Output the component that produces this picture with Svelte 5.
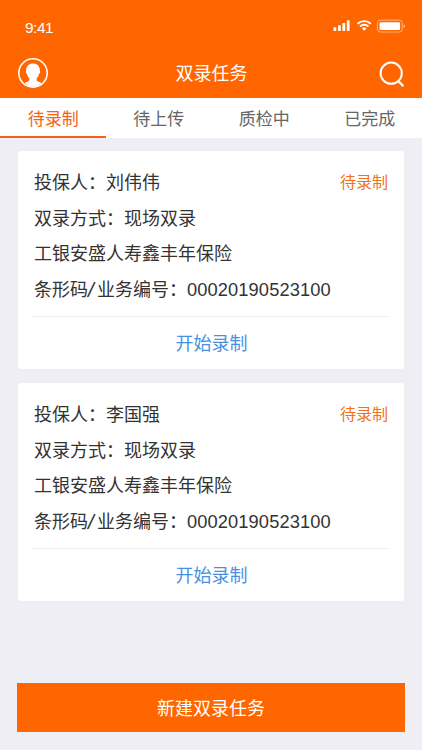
<script>
	const tabs = ['待录制', '待上传', '质检中', '已完成'];
	const tasks = [
		{ name: '刘伟伟', mode: '现场双录', product: '工银安盛人寿鑫丰年保险', code: '00020190523100', status: '待录制' },
		{ name: '李国强', mode: '现场双录', product: '工银安盛人寿鑫丰年保险', code: '00020190523100', status: '待录制' }
	];
	let active = $state(0);
</script>

<div class="page">
	<header>
		<div class="status-bar">
			<span class="time">9:41</span>
			<svg class="indicators" width="74" height="16" viewBox="0 0 74 16">
				<g fill="#fff">
					<rect x="1.5" y="8.3" width="2.8" height="3.7" rx="0.7" />
					<rect x="6" y="6.3" width="2.8" height="5.7" rx="0.7" />
					<rect x="10.4" y="4" width="2.8" height="8" rx="0.7" />
					<rect x="14.8" y="1.2" width="2.8" height="10.8" rx="0.7" />
				</g>
				<g fill="none" stroke="#fff" stroke-width="1.9">
					<path d="M25.6 4.8a9.4 9.4 0 0 1 13.2 0" />
					<path d="M28 7.5a6 6 0 0 1 8.4 0" />
				</g>
				<path d="M30 9.4a3.1 3.1 0 0 1 4.4 0l-2.2 2.4z" fill="#fff" />
				<rect x="45.3" y="1.2" width="25" height="11.8" rx="3" fill="none" stroke="#fff" stroke-opacity=".5" />
				<rect x="47.5" y="3.2" width="20.6" height="7.8" rx="1.2" fill="#fff" />
				<path d="M71.6 5.2v3.8q1.6-.6 1.6-1.9t-1.6-1.9z" fill="#fff" fill-opacity=".5" />
			</svg>
		</div>
		<div class="nav">
			<svg width="32" height="32" viewBox="0 0 32 32">
				<circle cx="16" cy="16" r="14.2" fill="none" stroke="#fff" stroke-width="1.6" />
				<path d="M16 6.4c4 0 6.8 2.7 6.8 6.8 0 1.1.6 1.2.3 2.4-.3 1.1-.9 1-1.2 1.8-.5 1.5-1 2.6-2 3.5-.6 1.8-.3 3 1.3 3.6l3.3 1.4A14 14 0 0 1 16 30a14 14 0 0 1-8.5-4.1l3.3-1.4c1.6-.6 1.9-1.8 1.3-3.6-1-.9-1.5-2-2-3.5-.3-.8-.9-.7-1.2-1.8-.3-1.2.3-1.3.3-2.4 0-4.1 2.8-6.8 6.8-6.8z" fill="#fff" />
			</svg>
			<h1>双录任务</h1>
			<svg class="search" width="26" height="27" viewBox="0 0 26 27">
				<circle cx="12.2" cy="12.2" r="10.6" fill="none" stroke="#fff" stroke-width="2" />
				<path d="M18.6 19.5l5.8 5.6" stroke="#fff" stroke-width="2.2" />
			</svg>
		</div>
	</header>

	<nav class="tabs">
		{#each tabs as tab, i}
			<button class="tab" class:active={active === i} onclick={() => (active = i)}>{tab}</button>
		{/each}
	</nav>

	<main>
		{#each tasks as task}
			<section class="card">
				<div class="info">
					<div class="row">
						<span>投保人：{task.name}</span>
						<span class="status">{task.status}</span>
					</div>
					<div class="row">双录方式：{task.mode}</div>
					<div class="row">{task.product}</div>
					<div class="row">条形码<span class="slash">/</span>业务编号：<span class="code">{task.code}</span></div>
				</div>
				<button class="start">开始录制</button>
			</section>
		{/each}
	</main>

	<footer>
		<button class="create">新建双录任务</button>
	</footer>
</div>

<style>
	:global(body) {
		margin: 0;
	}

	.page {
		display: flex;
		flex-direction: column;
		height: 750px;
		background: #efeef4;
		color: #333;
		font-family: "Liberation Sans", "Noto Sans CJK SC", sans-serif;
		font-size: 18px;
	}

	button {
		padding: 0;
		border: 0;
		background: none;
		color: inherit;
		font: inherit;
		cursor: pointer;
	}

	header {
		height: 98px;
		background: #f60;
		color: #fff;
	}

	.status-bar {
		display: flex;
		justify-content: space-between;
		height: 56px;
		padding: 19px 16px 0 25px;
		box-sizing: border-box;
	}

	.time {
		font-size: 15.5px;
		line-height: 18px;
		letter-spacing: -0.5px;
	}

	.nav {
		display: flex;
		align-items: center;
		justify-content: space-between;
		height: 34px;
		padding: 0 17px;
	}

	h1 {
		margin: 2px 0 0;
		padding-right: 5px;
		font-size: 18px;
		line-height: 34px;
		font-weight: 400;
	}

	.search {
		margin-top: 3px;
	}

	.tabs {
		display: grid;
		grid-template-columns: repeat(4, 1fr);
		flex: none;
		height: 40px;
		background: #fff;
		color: #666;
	}

	.tab {
		padding-left: 1px;
		border-bottom: 2px solid transparent;
		font-size: 17px;
	}

	.tab.active {
		border-color: #f2641a;
		color: #f2641a;
	}

	main {
		display: flex;
		flex-direction: column;
		gap: 14px;
		padding: 13px 18px 0;
	}

	.card {
		height: 218px;
		padding: 14px 14px 0;
		box-sizing: border-box;
		border-radius: 3px;
		background: #fff;
	}

	.info {
		height: 152px;
		padding: 0 2px;
		box-sizing: border-box;
		border-bottom: 1px solid #f0f0f0;
	}

	.row {
		display: flex;
		height: 35.7px;
		line-height: 36px;
		white-space: nowrap;
	}

	.status {
		margin-left: auto;
		color: #f37021;
		font-size: 16px;
	}

	.slash {
		width: 9px;
		font-size: 21px;
		font-style: italic;
	}

	.code {
		font-size: 18.3px;
		letter-spacing: 0.1px;
	}

	.start {
		width: 100%;
		height: 50px;
		padding-left: 1px;
		color: #4a90e2;
	}

	footer {
		display: flex;
		margin-top: auto;
		padding: 0 17px 18px;
	}

	.create {
		flex: 1;
		height: 49px;
		padding-bottom: 2px;
		background: #f60;
		color: #fff;
	}
</style>
